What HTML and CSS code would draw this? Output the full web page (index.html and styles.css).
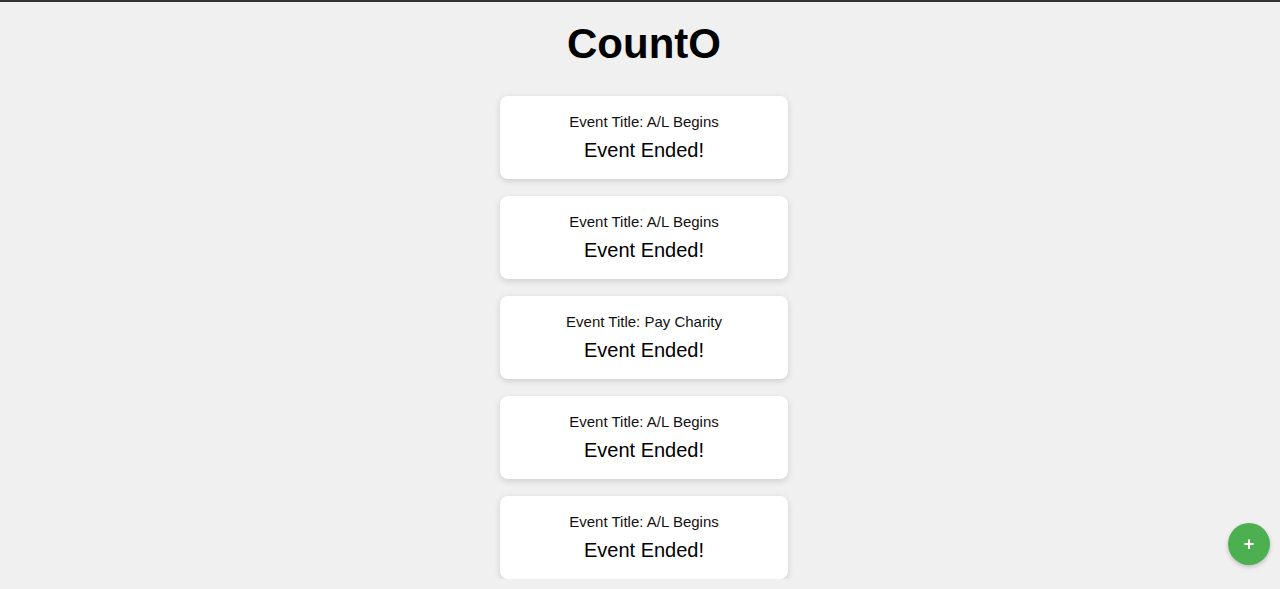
FILE: index.html
```html
<!DOCTYPE html>
<html>
<head>
<meta charset="utf-8">
<title>CountO</title>
<link rel="stylesheet" href="styles.css">
</head>
<body>
<div class="topbar"></div>
<main class="page">
  <h1 class="title">CountO</h1>
  <div class="list">
    <div class="card"><p class="event-title">Event Title: A/L Begins</p><p class="event-status">Event Ended!</p></div>
    <div class="card"><p class="event-title">Event Title: A/L Begins</p><p class="event-status">Event Ended!</p></div>
    <div class="card"><p class="event-title">Event Title: Pay Charity</p><p class="event-status">Event Ended!</p></div>
    <div class="card"><p class="event-title">Event Title: A/L Begins</p><p class="event-status">Event Ended!</p></div>
    <div class="card"><p class="event-title">Event Title: A/L Begins</p><p class="event-status">Event Ended!</p></div>
  </div>
</main>
<button class="fab">+</button>
</body>
</html>
```
FILE: styles.css
```css
html, body {
  margin: 0;
  padding: 0;
  background: #f0f0f0;
  font-family: "Liberation Sans", Arial, sans-serif;
  color: #000;
}
.topbar {
  height: 2px;
  background: #333;
}
.page {
  display: flex;
  flex-direction: column;
  align-items: center;
  padding-left: 8px;
}
.title {
  margin: 18px 0 28px;
  font-size: 42px;
  line-height: 48px;
  font-weight: bold;
}
.list {
  display: flex;
  flex-direction: column;
  gap: 17px;
}
.card {
  width: 288px;
  height: 83px;
  box-sizing: border-box;
  background: #fff;
  border-radius: 8px;
  box-shadow: 0 2px 6px rgba(0,0,0,0.15);
  display: flex;
  flex-direction: column;
  align-items: center;
  padding-top: 17px;
  text-align: center;
}
.event-title {
  margin: 0;
  font-size: 15px;
  line-height: 18px;
  color: #111;
}
.event-status {
  margin: 8px 0 0;
  font-size: 20px;
  line-height: 23px;
}
.fab {
  position: fixed;
  right: 10px;
  bottom: 24px;
  width: 42px;
  height: 42px;
  border-radius: 50%;
  border: none;
  background: #4caf50;
  color: #fff;
  font-family: "Liberation Sans", Arial, sans-serif;
  font-size: 18px;
  font-weight: bold;
  line-height: 42px;
  padding: 0;
  box-shadow: 0 2px 4px rgba(0,0,0,0.2);
}
```
